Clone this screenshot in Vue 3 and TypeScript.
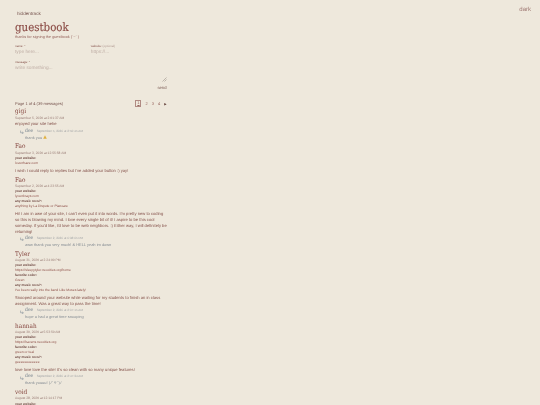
<script setup lang="ts">
interface Field { label: string; value: string }
interface Reply { date: string; text: string; emoji?: boolean }
interface Entry { name: string; date: string; fields: Field[]; lines: string[]; reply?: Reply }

const entries: Entry[] = [
  { name: 'gigi', date: 'September 5, 2026 at 2:01:37 AM', fields: [], lines: ['enjoyed your site hehe'],
    reply: { date: 'September 5, 2026 at 2:56:45 AM', text: 'thank you', emoji: true } },
  { name: 'Fao', date: 'September 3, 2026 at 12:55:58 AM',
    fields: [{ label: 'your website:', value: 'lovenfraze.com' }],
    lines: ["I wish I could reply to replies but I've added your button :) yay!"] },
  { name: 'Fao', date: 'September 2, 2026 at 4:23:55 AM',
    fields: [{ label: 'your website:', value: 'lyoenbrays.com' }, { label: 'any music recs?:', value: 'anything by La Dispute or Pianoare' }],
    lines: ["Hi! I am in awe of your site, I can't even put it into words. I'm pretty new to coding", 'so this is blowing my mind. I love every single bit of it! I aspire to be this cool', "someday. If you'd like, I'd love to be web neighbors. :) Either way, I will definitely be", 'returning!'],
    reply: { date: 'September 2, 2026 at 6:08:05 PM', text: 'aww thank you very much! & HELL yeah im down' } },
  { name: 'Tyler', date: 'August 31, 2026 at 2:24:00 PM',
    fields: [{ label: 'your website:', value: 'https://sleepytyler.neocities.org/home' }, { label: 'favorite color:', value: 'Green' }, { label: 'any music recs?:', value: "I've been really into the band Like Moses lately!" }],
    lines: ['Snooped around your website while waiting for my students to finish an in class', 'assignment. Was a great way to pass the time!'],
    reply: { date: 'September 2, 2026 at 2:07:15 AM', text: 'hope u had a great time snooping' } },
  { name: 'hannah', date: 'August 30, 2026 at 5:53:50 AM',
    fields: [{ label: 'your website:', value: 'https://havens.neocities.org' }, { label: 'favorite color:', value: 'green or teal' }, { label: 'any music recs?:', value: 'geeeeeeeeeeee' }],
    lines: ["love love love the site! It's so clean with so many unique features!"],
    reply: { date: 'September 2, 2026 at 2:47:34 AM', text: 'thank youuu! (ﾉ´ヮ`)ﾉ' } },
  { name: 'void', date: 'August 28, 2026 at 12:14:17 PM', fields: [{ label: 'your website:', value: '' }], lines: [] },
]
const pages = ['2', '3', '4']
</script>

<template>
  <div class="page">
    <a class="theme">dark</a>
    <main class="col">
      <div class="nav">hiddentrack</div>
      <h1>guestbook</h1>
      <p class="sub">thanks for signing the guestbook (´~`  )</p>
      <form class="form">
        <div class="row">
          <div class="cell">
            <div class="lab">name: *</div>
            <div class="ph">type here...</div>
          </div>
          <div class="cell">
            <div class="lab">website: <span class="opt">(optional)</span></div>
            <div class="ph">https://...</div>
          </div>
        </div>
        <div class="lab msg">message: *</div>
        <div class="area">
          <div class="ph">write something...</div>
          <svg class="grip" width="5" height="5" viewBox="0 0 5 5">
            <path d="M0.5 4.5 4.5 0.5M2.5 4.5 4.5 2.5" stroke="#8a8078" stroke-width=".5" fill="none" />
          </svg>
        </div>
        <div class="send">send</div>
      </form>
      <div class="pager">
        <span>Page 1 of 4 (39 messages)</span>
        <span class="nums">
          <b class="cur">1</b>
          <span v-for="p in pages" :key="p">{{ p }}</span>
          <span class="next">▶</span>
        </span>
      </div>
      <article v-for="(e, i) in entries" :key="i" class="entry">
        <h2>{{ e.name }}</h2>
        <div class="date">{{ e.date }}</div>
        <div v-if="e.fields.length" class="fields">
          <template v-for="f in e.fields" :key="f.label">
            <div class="fl">{{ f.label }}</div>
            <div v-if="f.value" class="fv">{{ f.value }}</div>
          </template>
        </div>
        <div v-if="e.lines.length" class="body">
          <div v-for="l in e.lines" :key="l">{{ l }}</div>
        </div>
        <div v-if="e.reply" class="reply">
          <svg class="arrow" width="5" height="5" viewBox="0 0 5 5">
            <path d="M.6 .6V2.8H3.2M2.2 1.9 3.4 2.8 2.2 3.7" stroke="#7d8a94" stroke-width=".55" fill="none" />
          </svg>
          <div>
            <div class="rhead"><span class="rname">dee</span><span class="rdate">{{ e.reply.date }}</span></div>
            <div class="rtext">{{ e.reply.text }}<svg v-if="e.reply.emoji" class="emoji" width="4" height="4" viewBox="0 0 4 4"><path d="M2 .2 3.8 3.7H.2Z" fill="#e0b040" /></svg></div>
          </div>
        </div>
      </article>
    </main>
  </div>
</template>

<style>
html, body { margin: 0; background: #eee8dc; }
</style>

<style scoped>
.page {
  position: relative;
  height: 405px;
  overflow: hidden;
  background: #eee8dc;
  font-family: "Liberation Sans", Arial, sans-serif;
  color: #85524b;
  font-size: 4.15px;
  white-space: nowrap;
  text-rendering: geometricPrecision;
  filter: blur(0.3px);
}
.theme {
  position: absolute;
  top: 7px;
  right: 9px;
  font-size: 6px;
  line-height: 7px;
  color: #a07a74;
}
.col {
  width: 151.5px;
  margin-left: 15px;
  padding-top: 11px;
}
.nav {
  margin-left: 2px;
  font-size: 4.6px;
  line-height: 6px;
  color: #75524c;
}
h1 {
  margin: 2.6px 0 0;
  font-family: "DejaVu Serif", serif;
  font-stretch: condensed;
  font-size: 11.4px;
  font-weight: 400;
  line-height: 15px;
  color: #8b4b45;
  -webkit-text-stroke: 0.12px #8b4b45;
}
.sub {
  margin: 0.9px 0 0;
  font-size: 3.8px;
  line-height: 5px;
  color: #96635c;
}
.form { margin-top: 3.5px; }
.row { display: flex; }
.cell { width: 77px; }
.lab {
  font-size: 3px;
  line-height: 4px;
  color: #85524b;
}
.opt { color: #b09890; }
.msg { margin-top: 4px; }
.ph {
  margin-top: 2px;
  font-size: 4.8px;
  line-height: 6px;
  color: #bfaea5;
}
.area { position: relative; height: 21.5px; display: flow-root; }
.grip { position: absolute; right: 0; top: 13.5px; }
.send {
  text-align: right;
  font-size: 4.2px;
  line-height: 6px;
  color: #7b5a54;
}
.pager {
  display: flex;
  justify-content: space-between;
  align-items: center;
  margin: 9px 0 0.5px;
  font-size: 4px;
  line-height: 6px;
  color: #75524c;
}
.nums { display: flex; gap: 4px; align-items: center; color: #9b6a62; }
.cur { font-weight: 400; border: .3px solid #b08a82; padding: 0 .9px; line-height: 4.4px; color: #96635c; text-decoration: underline; }
.next { font-size: 3px; color: #5d3a34; }
.entry { margin-bottom: 2.1px; }
h2 {
  margin: 0;
  font-family: "DejaVu Serif", serif;
  font-stretch: condensed;
  font-weight: 400;
  font-size: 6.4px;
  line-height: 8.3px;
  color: #84443e;
}
.date {
  font-size: 3.3px;
  line-height: 4px;
  color: #9a7d76;
}
.fields { margin-top: 1.3px; }
.fl {
  font-size: 3.3px;
  line-height: 5px;
  font-weight: 700;
  color: #6f4943;
}
.fv {
  font-size: 3.4px;
  line-height: 5px;
  color: #8f5049;
}
.body {
  margin-top: 1.75px;
  font-size: 4.15px;
  line-height: 5.9px;
  color: #85524b;
}
.reply {
  display: flex;
  gap: .5px;
  margin: 1.3px 0 0 4.5px;
  align-items: flex-start;
}
.arrow { margin-top: 1.5px; }
.rhead { display: flex; gap: 3.5px; align-items: baseline; line-height: 5.5px; }
.rname {
  font-family: "DejaVu Serif", serif;
  font-stretch: condensed;
  font-size: 5px;
  color: #76838e;
}
.rdate { font-size: 3.1px; color: #a5a7a8; }
.rtext {
  margin-top: .6px;
  font-size: 3.95px;
  line-height: 5.5px;
  color: #858c93;
}
.emoji { margin-left: 1.2px; vertical-align: -0.4px; }
</style>
